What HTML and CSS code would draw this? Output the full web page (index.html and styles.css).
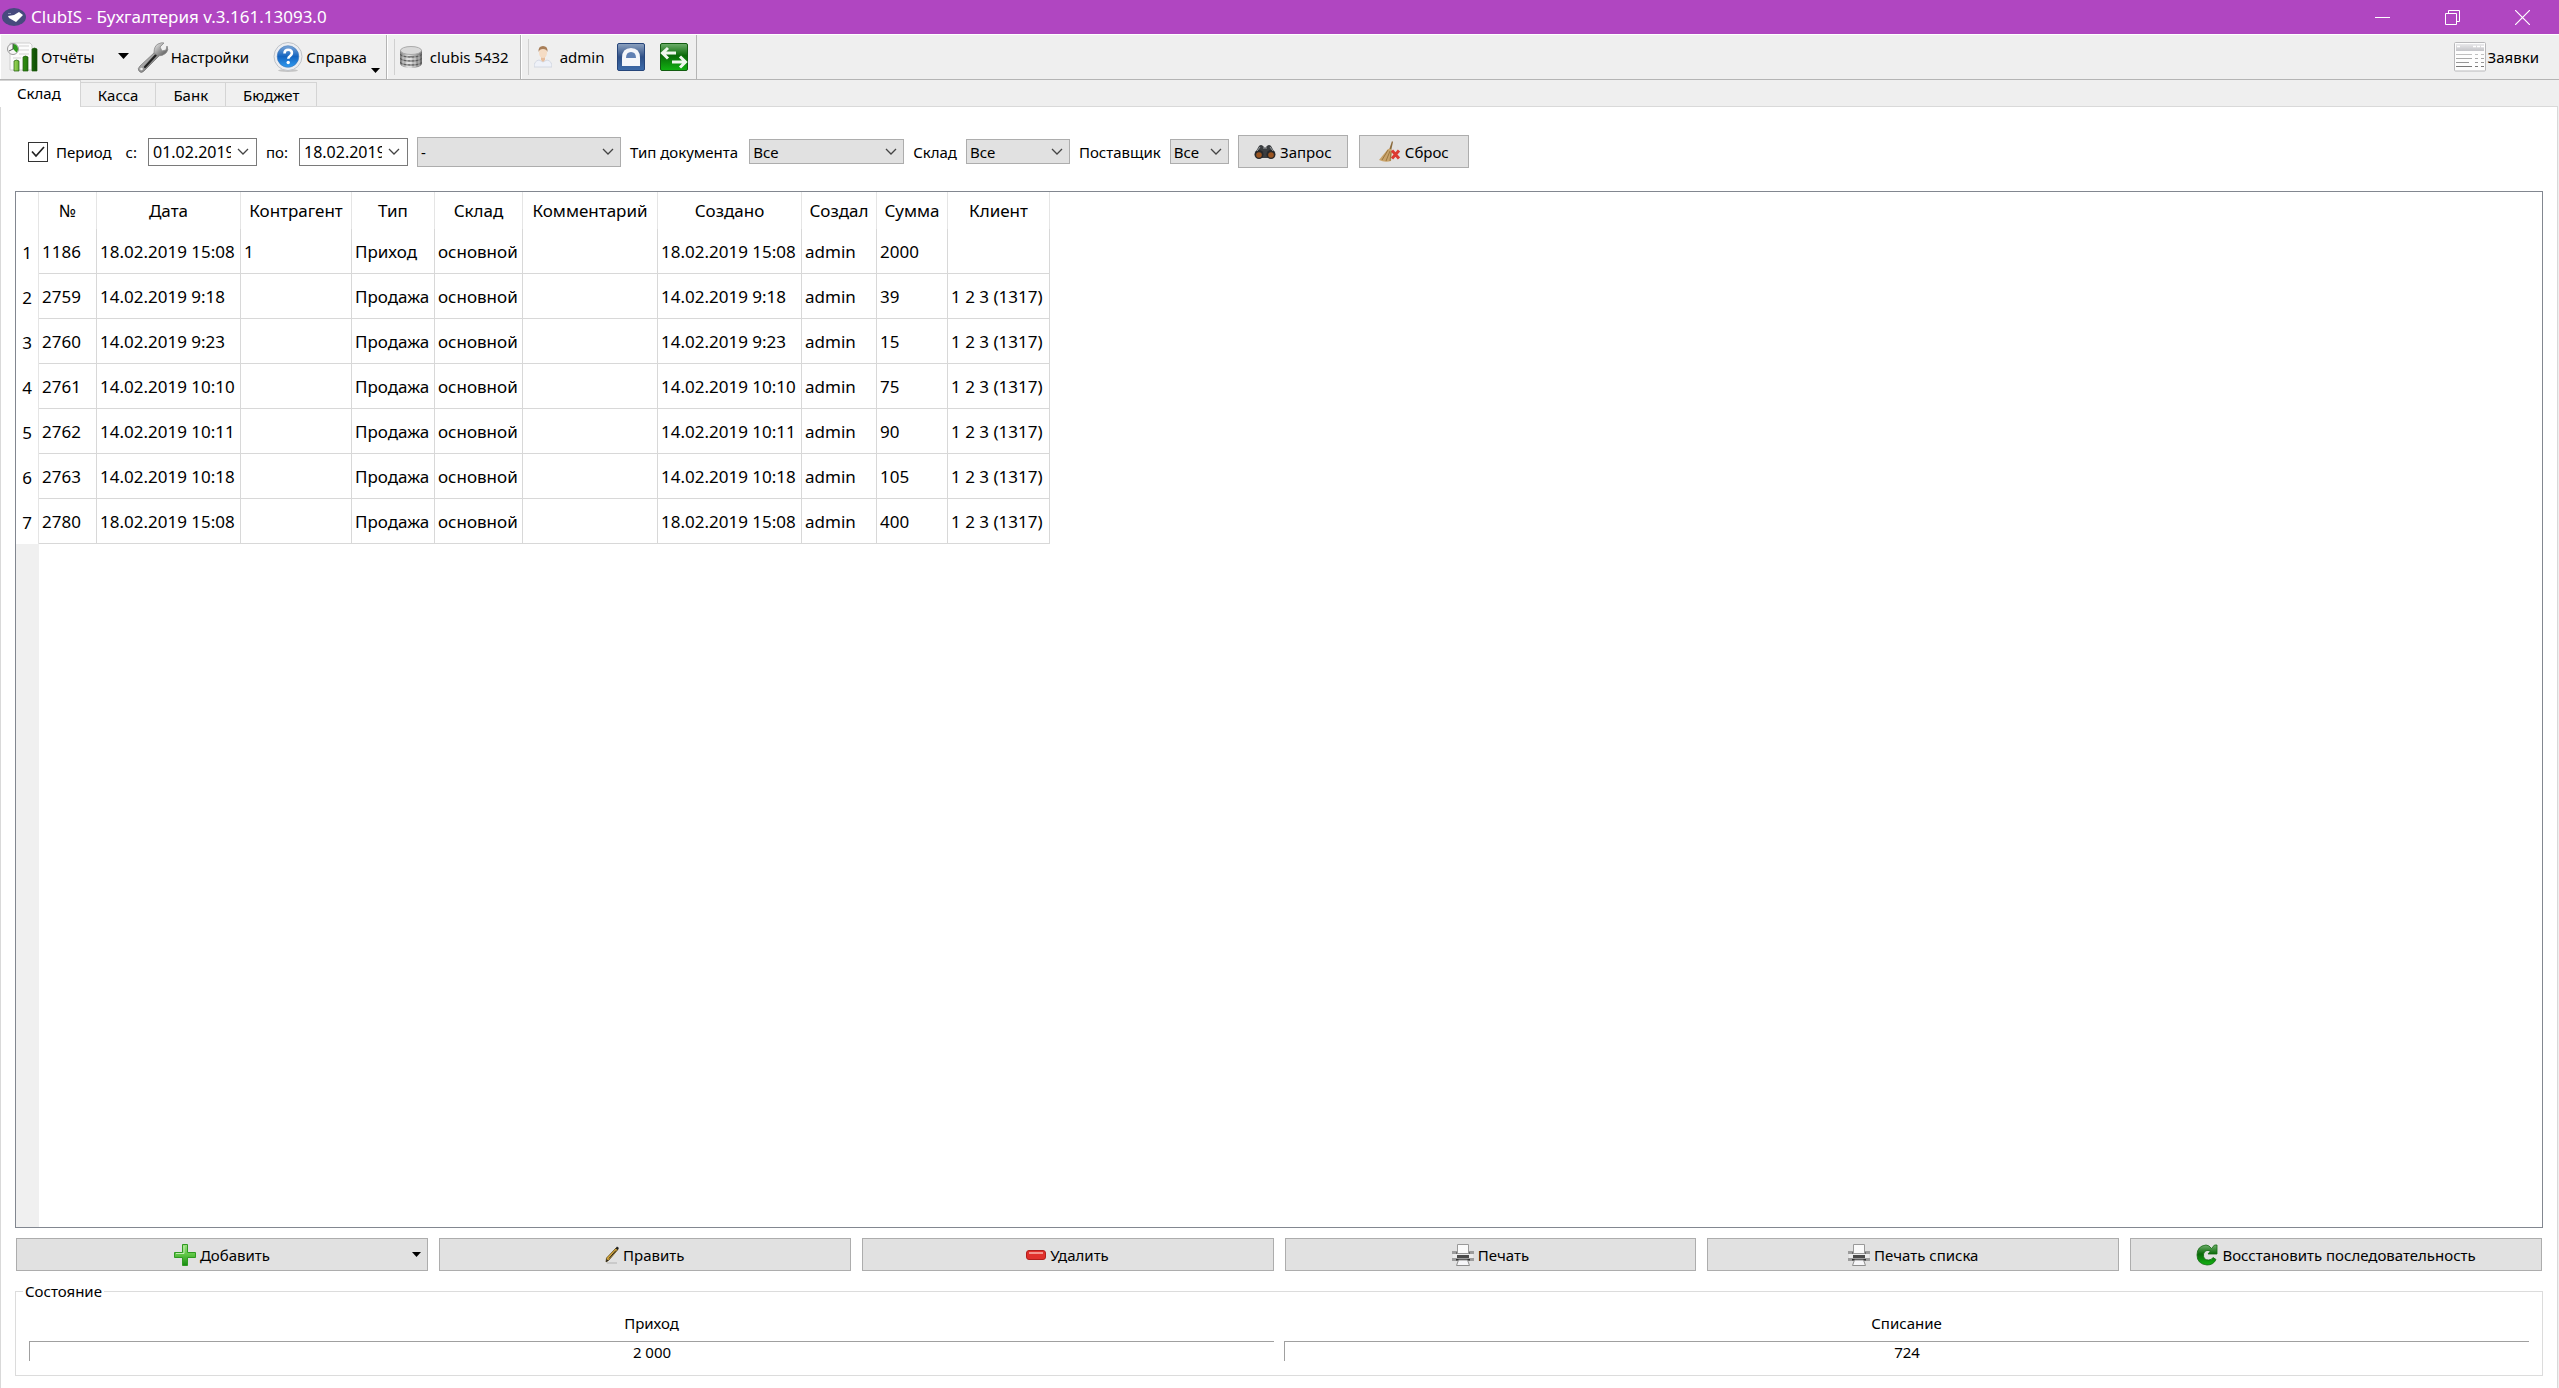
FILE: index.html
```
<!DOCTYPE html>
<html lang="ru">
<head>
<meta charset="utf-8">
<title>ClubIS - Бухгалтерия</title>
<link rel="stylesheet" href="styles.css">
</head>
<body>
<svg class="defs" width="0" height="0" aria-hidden="true">
  <defs>
    <linearGradient id="bar" x1="0" x2="1" y1="0" y2="0"><stop offset="0" stop-color="#9fd85a"/><stop offset=".45" stop-color="#2f8a12"/><stop offset="1" stop-color="#0c4a04"/></linearGradient>
    <linearGradient id="steel" x1="0" x2="1" y1="0" y2="1"><stop offset="0" stop-color="#f4f4f4"/><stop offset=".5" stop-color="#9a9a9a"/><stop offset="1" stop-color="#4c4c4c"/></linearGradient>
    <linearGradient id="blue" x1="0" x2="0" y1="0" y2="1"><stop offset="0" stop-color="#7fa8d8"/><stop offset=".5" stop-color="#1464c0"/><stop offset="1" stop-color="#2f9af0"/></linearGradient>
    <linearGradient id="lock" x1="0" x2="0" y1="0" y2="1"><stop offset="0" stop-color="#8ea3c0"/><stop offset=".5" stop-color="#2e4f86"/><stop offset="1" stop-color="#3d6cab"/></linearGradient>
    <linearGradient id="green" x1="0" x2="0" y1="0" y2="1"><stop offset="0" stop-color="#6fae6c"/><stop offset=".45" stop-color="#0a6a08"/><stop offset="1" stop-color="#12b312"/></linearGradient>
    <linearGradient id="plus" x1="0" x2="0" y1="0" y2="1"><stop offset="0" stop-color="#9be080"/><stop offset=".5" stop-color="#5cc443"/><stop offset="1" stop-color="#168a10"/></linearGradient>
    <linearGradient id="drum" x1="0" x2="1" y1="0" y2="0"><stop offset="0" stop-color="#7d7d7d"/><stop offset=".4" stop-color="#e4e4e4"/><stop offset="1" stop-color="#6a6a6a"/></linearGradient>
    <linearGradient id="head" x1="0" x2="0" y1="0" y2="1"><stop offset="0" stop-color="#e8e8ea"/><stop offset="1" stop-color="#c4c4c8"/></linearGradient>
    <symbol id="chevron" viewBox="0 0 12 8"><path d="M1 1l5 5 5-5" fill="none" stroke="#444" stroke-width="1.3"/></symbol>
    <symbol id="triangle" viewBox="0 0 11 6"><path d="M0 0h11L5.500 6z" fill="#000"/></symbol>
    <symbol id="printer" viewBox="0 0 22 22">
      <path d="M0 7h22v3H0zM0 14h22v3H0z" fill="#9c9c9c"/><path d="M1 10h20v4H1z" fill="#ececec"/>
      <path d="M4 8h14v2H4z" fill="#6b6b6b"/><path d="M5 11h12v3H5z" fill="#4b4b4b"/>
      <path d="M5.500.5h11v9h-11z" fill="#fafafa" stroke="#999"/><path d="M4 15h14v1.500H4z" fill="#333"/>
      <path d="M6.500 16h9l2 5.500h-13z" fill="#f6f6f8" stroke="#8e8e8e"/>
    </symbol>
  </defs>
</svg>

<header class="titlebar">
  <svg class="app-icon" width="24" height="18" viewBox="0 0 24 18"><ellipse cx="12" cy="9" rx="12" ry="9" fill="#474a7e"/><path d="M6 8l6-1 5-3 4 3-7 7-7-4z" fill="#fff"/><path d="M6 5h3v1H6z" fill="#8a8cb5"/></svg>
  <h1 class="title">ClubIS - Бухгалтерия v.3.161.13093.0</h1>
  <button class="win-btn" aria-label="Свернуть"><svg width="15" height="15" viewBox="0 0 15 15"><path d="M0 7.500h15" stroke="#fff"/></svg></button>
  <button class="win-btn" aria-label="Развернуть"><svg width="15" height="15" viewBox="0 0 15 15" fill="none" stroke="#fff"><path d="M.5 3.500h11v11H.5zM3.500 3.500v-3h11v11h-3"/></svg></button>
  <button class="win-btn" aria-label="Закрыть"><svg width="15" height="15" viewBox="0 0 15 15"><path d="M0 0l15 15M15 0L0 15" stroke="#fff" stroke-width="1.200"/></svg></button>
</header>

<nav class="toolbar">
  <div class="tool-group tool-main">
    <button class="tool"><svg width="32" height="32" viewBox="0 0 32 32">
      <path d="M3 2h20l2 2v25H3z" fill="#fcfcfc" stroke="#cfcfcf"/><path d="M12 5h10M12 9h10M12 13h10M6 17h8" stroke="#d3d3d3"/>
      <circle cx="6" cy="8" r="5.500" fill="#f6f6f6" stroke="#999"/><path d="M6 8V3a5 5 0 0 1 3.500 8.500z" fill="#2d9a1c"/><path d="M6 3v5l-4 2" stroke="#555" fill="none"/>
      <path d="M7 20q2.500-2 5 0v10H7zM16 16q2.500-2 5 0v14h-5zM25 8q2.500-2 5 0v22h-5z" fill="url(#bar)" stroke="#1c5a0c" stroke-width=".7"/></svg>Отчёты</button>
    <button class="drop" aria-label="Список отчётов"><svg width="11" height="6"><use href="#triangle"/></svg></button>
    <button class="tool"><svg width="32" height="32" viewBox="0 0 32 32">
      <path d="M18 11l4 4L7 30q-3 3-5 0-2-2 1-5z" fill="url(#steel)" stroke="#777" stroke-width=".8"/>
      <path d="M19 14L8 26" stroke="#222" stroke-width="2.200" stroke-linecap="round"/>
      <path d="M17 12q0-7 4-9 4-2 6-1l-4 4 2 4 4-1 1-4q2 4-1 7-3 3-8 3z" fill="url(#steel)" stroke="#888" stroke-width=".8"/><circle cx="4.500" cy="28" r="1.300" fill="#eee"/></svg>Настройки</button>
    <button class="tool tool-help"><svg width="32" height="32" viewBox="0 0 32 32">
      <ellipse cx="16" cy="29.500" rx="10" ry="1.500" fill="#c4c4c4"/><circle cx="16" cy="15.500" r="14" fill="#eceef2" stroke="#bfc3c8"/><circle cx="16" cy="15.500" r="10.800" fill="url(#blue)" stroke="#3f78b8" stroke-width=".6"/>
      <path d="M12.500 12.500q0-3.700 3.700-3.700t3.700 3.200q0 1.800-1.800 3t-1.800 2.800" fill="none" stroke="#fff" stroke-width="2.600"/><circle cx="16.200" cy="21.500" r="1.700" fill="#fff"/></svg>Справка</button>
    <svg class="corner-arrow" width="9" height="5" viewBox="0 0 11 6" preserveAspectRatio="none"><path d="M0 0h11L5.500 6z"/></svg>
  </div>
  <div class="tool-group">
    <span class="grip"></span>
    <span class="status status-db"><svg width="22" height="22" viewBox="0 0 22 22">
      <path d="M0 4v14q2 4 11 4t11-4V4z" fill="url(#drum)"/><path d="M0 8q2 3 11 3t11-3M0 12q2 3 11 3t11-3M0 16q2 3 11 3t11-3" fill="none" stroke="#5d5d5d" stroke-width="1.300"/>
      <path d="M3 9v11M7 10v11M11 11v11M15 10v11M19 9v11" stroke="#fff" stroke-opacity=".5"/><ellipse cx="11" cy="4.500" rx="10.500" ry="4" fill="#d9d9d9" stroke="#aaa"/></svg>clubis 5432</span>
  </div>
  <div class="tool-group">
    <span class="grip"></span>
    <span class="status status-user"><svg width="18" height="22" viewBox="0 0 18 22">
      <path d="M0 21q0-6 5-7l4 2 4-2q5 1 5 7z" fill="#eef1f8" stroke="#c9cedb" stroke-width=".7"/><path d="M7 10h4v4l-2 2-2-2z" fill="#e7bd9c"/><ellipse cx="9" cy="6.500" rx="4" ry="5.500" fill="#f5dcc4"/><path d="M4.500 6Q4 0 9 0t4.500 6q-1-3-4.500-3T4.500 6z" fill="#a87e58"/></svg>admin</span>
    <button class="icon-btn" aria-label="Заблокировать"><svg width="28" height="28" viewBox="0 0 28 28"><rect x=".5" y=".5" width="27" height="27" rx="1.500" fill="url(#lock)" stroke="#26457a"/><path d="M5 23v-8Q5 5 14 5t9 10v8z" fill="#f4f6fa"/><path d="M9 15q0-6 5-6t5 6z" fill="#6080b3"/></svg></button>
    <button class="icon-btn" aria-label="Сменить пользователя"><svg width="28" height="28" viewBox="0 0 28 28"><rect x=".5" y=".5" width="27" height="27" rx="1.500" fill="url(#green)" stroke="#125c10"/><path d="M3 10h13M8 5l-5.500 5L8 15.500M12 19h13M20 13.500l5.500 5.500-5.500 5.500" fill="none" stroke="#f0f7ee" stroke-width="3"/></svg></button>
  </div>
  <button class="tool tool-orders"><svg width="32" height="30" viewBox="0 0 32 30">
    <rect x=".5" y=".5" width="31" height="28.500" rx="1" fill="#fdfdfd" stroke="#b9b9bb"/><path d="M2 2h28v7H2z" fill="url(#head)"/><path d="M3 4.500h3M19 4.500h3M23 4.500h3M27 4.500h3" stroke="#fff" stroke-width="1.500"/>
    <path d="M2 12.500h16M21 12.500h3M27 12.500h3" stroke="#c0c0c0"/><path d="M2 16.500h16M21 16.500h3M27 16.500h3" stroke="#a9a9a9"/><path d="M2 20.500h13M21 20.500h3M27 20.500h3" stroke="#969696"/><path d="M2 24.500h16M21 24.500h3M27 24.500h3" stroke="#787878"/></svg>Заявки</button>
</nav>

<div class="tabs" role="tablist">
  <button class="tab tab-active" role="tab" aria-selected="true">Склад</button>
  <button class="tab" role="tab">Касса</button>
  <button class="tab" role="tab">Банк</button>
  <button class="tab" role="tab">Бюджет</button>
</div>

<main class="pane">
  <form class="filters">
    <span class="check"><input type="checkbox" id="period" checked><svg width="14" height="12" viewBox="0 0 14 12"><path d="M1 5.500l4 4.500L13 1" fill="none" stroke="#222" stroke-width="1.700"/></svg></span>
    <label class="period-label" for="period">Период</label>
    <label class="date-label" for="from">с:</label>
    <span class="date"><input id="from" type="text" value="01.02.2019"><svg width="12" height="8"><use href="#chevron"/></svg></span>
    <label class="date-label" for="to">по:</label>
    <span class="date"><input id="to" type="text" value="18.02.2019"><svg width="12" height="8"><use href="#chevron"/></svg></span>
    <span class="combo combo-tall combo-range"><select aria-label="Интервал"><option>-</option></select><svg width="12" height="8"><use href="#chevron"/></svg></span>
    <label class="date-label" for="doctype">Тип документа</label>
    <span class="combo combo-type"><select id="doctype"><option>Все</option></select><svg width="12" height="8"><use href="#chevron"/></svg></span>
    <label for="store">Склад</label>
    <span class="combo combo-store"><select id="store"><option>Все</option></select><svg width="12" height="8"><use href="#chevron"/></svg></span>
    <label for="supplier">Поставщик</label>
    <span class="combo combo-supplier"><select id="supplier"><option>Все</option></select><svg width="12" height="8"><use href="#chevron"/></svg></span>
    <button type="button" class="btn btn-filter"><svg width="22" height="16" viewBox="0 0 22 16">
      <path d="M1 9L5 2q2-2 4 0l2 2 2-2q2-2 4 0l4 7-3 5H4z" fill="#3a3d40"/><circle cx="5" cy="10.500" r="4.500" fill="#26282a"/><circle cx="17" cy="10.500" r="4.500" fill="#26282a"/><circle cx="5" cy="11" r="2.800" fill="#9a5420"/><circle cx="17" cy="11" r="2.800" fill="#9a5420"/><path d="M6 3l-3 4M16 3l3 4M9 4h4" stroke="#9b9fa2" fill="none"/></svg>Запрос</button>
    <button type="button" class="btn btn-filter"><svg width="22" height="22" viewBox="0 0 22 22">
      <path d="M13 0l1 1-2 9-2-1z" fill="#8a6a3c"/><path d="M9 8q4-1 4 3l-1 9q-6 2-12-1z" fill="#c9a36a"/><path d="M9 9L3 19M11 10L7 20M12 11l-1 9" stroke="#94703a" stroke-width=".9"/><path d="M13 9.500l7 8M20 9.500l-7 8" stroke="#dc3a32" stroke-width="3"/></svg>Сброс</button>
  </form>

  <div class="grid-frame">
    <table class="grid">
      <colgroup><col class="c-row"><col class="c-num"><col class="c-date"><col class="c-agent"><col class="c-type"><col class="c-store"><col class="c-note"><col class="c-date"><col class="c-author"><col class="c-sum"><col class="c-client"></colgroup>
      <thead><tr><th></th><th>№</th><th>Дата</th><th>Контрагент</th><th>Тип</th><th>Склад</th><th>Комментарий</th><th>Создано</th><th>Создал</th><th>Сумма</th><th>Клиент</th></tr></thead>
      <tbody>
        <tr><th>1</th><td>1186</td><td>18.02.2019 15:08</td><td>1</td><td>Приход</td><td>основной</td><td></td><td>18.02.2019 15:08</td><td>admin</td><td>2000</td><td></td></tr>
        <tr><th>2</th><td>2759</td><td>14.02.2019 9:18</td><td></td><td>Продажа</td><td>основной</td><td></td><td>14.02.2019 9:18</td><td>admin</td><td>39</td><td>1 2 3 (1317)</td></tr>
        <tr><th>3</th><td>2760</td><td>14.02.2019 9:23</td><td></td><td>Продажа</td><td>основной</td><td></td><td>14.02.2019 9:23</td><td>admin</td><td>15</td><td>1 2 3 (1317)</td></tr>
        <tr><th>4</th><td>2761</td><td>14.02.2019 10:10</td><td></td><td>Продажа</td><td>основной</td><td></td><td>14.02.2019 10:10</td><td>admin</td><td>75</td><td>1 2 3 (1317)</td></tr>
        <tr><th>5</th><td>2762</td><td>14.02.2019 10:11</td><td></td><td>Продажа</td><td>основной</td><td></td><td>14.02.2019 10:11</td><td>admin</td><td>90</td><td>1 2 3 (1317)</td></tr>
        <tr><th>6</th><td>2763</td><td>14.02.2019 10:18</td><td></td><td>Продажа</td><td>основной</td><td></td><td>14.02.2019 10:18</td><td>admin</td><td>105</td><td>1 2 3 (1317)</td></tr>
        <tr><th>7</th><td>2780</td><td>18.02.2019 15:08</td><td></td><td>Продажа</td><td>основной</td><td></td><td>18.02.2019 15:08</td><td>admin</td><td>400</td><td>1 2 3 (1317)</td></tr>
      </tbody>
    </table>
  </div>

  <div class="actions">
    <button class="btn btn-add"><svg width="22" height="22" viewBox="0 0 22 22"><path d="M8.500.5h5v8h8v5h-8v8h-5v-8h-8v-5h8z" fill="url(#plus)" stroke="#2f9a22"/><path d="M10 2v7.500H2" fill="none" stroke="#d6f5c9" stroke-opacity=".8"/></svg>Добавить<svg class="menu-arrow" width="9" height="5" viewBox="0 0 11 6" preserveAspectRatio="none"><path d="M0 0h11L5.500 6z"/></svg></button>
    <button class="btn"><svg width="14" height="18" viewBox="0 0 14 18"><path d="M2 17h10" stroke="#c2c2c2" stroke-width="1.500"/><path d="M1.500 12L11 2l2 1.500L4 14l-3 2z" fill="#d9a83a" stroke="#5a4718" stroke-width=".8"/><path d="M10.500 2.500L12 .5l2 1.500-1.500 2zM1 16l.5-3 2 1.500z" fill="#222"/><path d="M4 12.500l7-8" stroke="#222"/></svg>Править</button>
    <button class="btn"><svg width="20" height="10" viewBox="0 0 20 10"><rect x=".5" y=".5" width="19" height="9" rx="2.500" fill="#e0302c" stroke="#b01f1c"/><path d="M3 3h14" stroke="#f3938c" stroke-width="2"/></svg>Удалить</button>
    <button class="btn"><svg width="22" height="22"><use href="#printer"/></svg>Печать</button>
    <button class="btn"><svg width="22" height="22"><use href="#printer"/></svg>Печать списка</button>
    <button class="btn"><svg width="22" height="22" viewBox="0 0 22 22"><path d="M15.500 4.500l3-3.500H21v9h-9l2.500-3Q9 5 7.500 10q-.5 6 5 6 3 0 4.500-2.500l3 2Q17.500 21 11 21 1 20 1 11 1 2 10 1q3 0 5.500 3.500z" fill="url(#green)" stroke="#126a10" stroke-width=".8"/></svg>Восстановить последовательность</button>
  </div>

  <fieldset class="summary">
    <legend>Состояние</legend>
    <div class="total"><label for="income">Приход</label><output id="income">2 000</output></div>
    <div class="total"><label for="expense">Списание</label><output id="expense">724</output></div>
  </fieldset>
</main>
</body>
</html>
```
FILE: styles.css
```
* { box-sizing: border-box; }

body {
  margin: 0;
  min-height: 100vh;
  display: flex;
  flex-direction: column;
  background: #efefef;
  color: #000;
  font: 15px/20px "Noto Sans", "Open Sans", sans-serif;
}

button, input, select { font: inherit; color: inherit; margin: 0; }
button { padding: 0; border: 0; background: none; white-space: nowrap; }
svg { display: block; flex: none; }
.defs { position: absolute; }

/* window title */
.titlebar {
  display: flex;
  align-items: center;
  height: 34px;
  padding: 0 2px;
  background: #b046c1;
  color: #fff;
}
.title { flex: 1; margin: 0 0 0 5px; font-size: 17px; font-weight: 400; line-height: 24px; }
.win-btn { display: flex; align-items: center; justify-content: center; width: 70px; height: 34px; }

/* toolbar */
.toolbar {
  display: flex;
  height: 46px;
  border-top: 1px solid #fff;
  border-bottom: 1px solid #b4b4b4;
}
.tool-group { display: flex; align-items: center; border-right: 1px solid #b4b4b4; padding-left: 6px; border-left: 1px solid #fff; }
.tool { display: flex; align-items: center; gap: 2px; }
.drop { padding: 0 8px 2px 23px; }
.tool-help { margin-left: 23px; }
.corner-arrow { align-self: flex-end; margin: 0 6px 6px 4px; }
.grip { width: 1px; height: 36px; background: #d0d0d0; }
.status { display: flex; align-items: center; gap: 8px; margin-left: 5px; }
.status-db { margin-right: 11px; }
.status-user { margin-right: 13px; }
.icon-btn { margin-right: 8px; }
.icon-btn + .icon-btn { margin-left: 7px; }
.tool-orders { margin: 0 20px 0 auto; }

/* tabs */
.tabs { display: flex; align-items: flex-end; height: 27px; }
.tab {
  height: 25px;
  padding: 0 17px;
  border: 1px solid #d4d4d4;
  border-width: 1px 1px 0 0;
  background: #f0f0f0;
}
.tab-active { position: relative; z-index: 1; height: 27px; padding: 0 19px 2px 17px; background: #fff; }

/* document pane */
.pane {
  flex: 1;
  display: flex;
  flex-direction: column;
  margin: -1px 1px 0 0;
  padding: 28px 14px 12px;
  border: 1px solid #d9d9d9;
  border-bottom: 0;
  background: #fff;
}

.filters { display: flex; align-items: center; gap: 9px; margin-bottom: 23px; padding-left: 13px; }
.check, .date, .combo { display: grid; align-items: center; }
.check > *, .date > *, .combo > * { grid-area: 1 / 1; }
.check svg, .date svg, .combo svg { pointer-events: none; }
.check svg { justify-self: center; }
.check input { appearance: none; width: 20px; height: 20px; border: 1px solid #333; background: #fff; }
.period-label { margin: 0 5px 0 -1px; }
.date-label { margin-right: 2px; }
.date { width: 109px; height: 28px; border: 1px solid #7a7a7a; background: #fff; }
.date input { width: 82px; border: 0; padding: 0 0 0 4px; background: none; font-size: 16px; }
.date svg, .combo svg { justify-self: end; margin-right: 7px; }
.combo select {
  appearance: none;
  width: 100%;
  height: 25px;
  padding: 0 22px 0 3px;
  border: 1px solid #adadad;
  border-radius: 0;
  background: #e1e1e1;
}
.combo-tall select { height: 30px; }
.combo-range { width: 204px; }
.combo-type { width: 155px; }
.combo-store { width: 104px; }
.combo-supplier { width: 59px; }

.btn {
  display: flex;
  align-items: center;
  justify-content: center;
  gap: 4px;
  height: 33px;
  border: 1px solid #adadad;
  background: #e1e1e1;
}
.btn-filter { width: 110px; }
.btn-filter + .btn-filter { margin-left: 2px; }

/* data grid */
.grid-frame {
  flex: 1;
  border: 1px solid #828790;
  background: linear-gradient(to right, #f0f0f0 23px, #fff 23px);
}
.grid {
  table-layout: fixed;
  width: 1034px;
  border-collapse: separate;
  border-spacing: 0;
  background: #fff;
  font-size: 17px;
  line-height: 24px;
  white-space: nowrap;
}
.c-row { width: 23px; }
.c-num { width: 58px; }
.c-date { width: 144px; }
.c-agent { width: 111px; }
.c-type { width: 83px; }
.c-store { width: 88px; }
.c-note { width: 135px; }
.c-author { width: 75px; }
.c-sum { width: 71px; }
.c-client { width: 102px; }
.grid th { padding: 2px 0 0; border-right: 1px solid #e5e5e5; font-weight: 400; text-align: center; }
.grid thead th { height: 37px; padding: 0; }
.grid td { height: 45px; padding: 2px 0 0 3px; border: 1px solid #d8d8d8; border-width: 0 1px 1px 0; }

/* bottom actions */
.actions { display: grid; grid-template-columns: repeat(6, 1fr); gap: 11px; margin: 10px 1px; }
.btn-add { position: relative; }
.menu-arrow { position: absolute; right: 6px; }

.summary {
  display: grid;
  grid-template-columns: 1fr 1fr;
  gap: 10px;
  margin: 0;
  padding: 12px 13px 14px;
  border: 1px solid #dcdcdc;
}
.summary legend { margin-left: -6px; padding: 0 2px; }
.total { display: flex; flex-direction: column; gap: 8px; text-align: center; }
.total output { height: 20px; border-top: 1px solid #a0a0a0; border-left: 1px solid #a0a0a0; }
```
